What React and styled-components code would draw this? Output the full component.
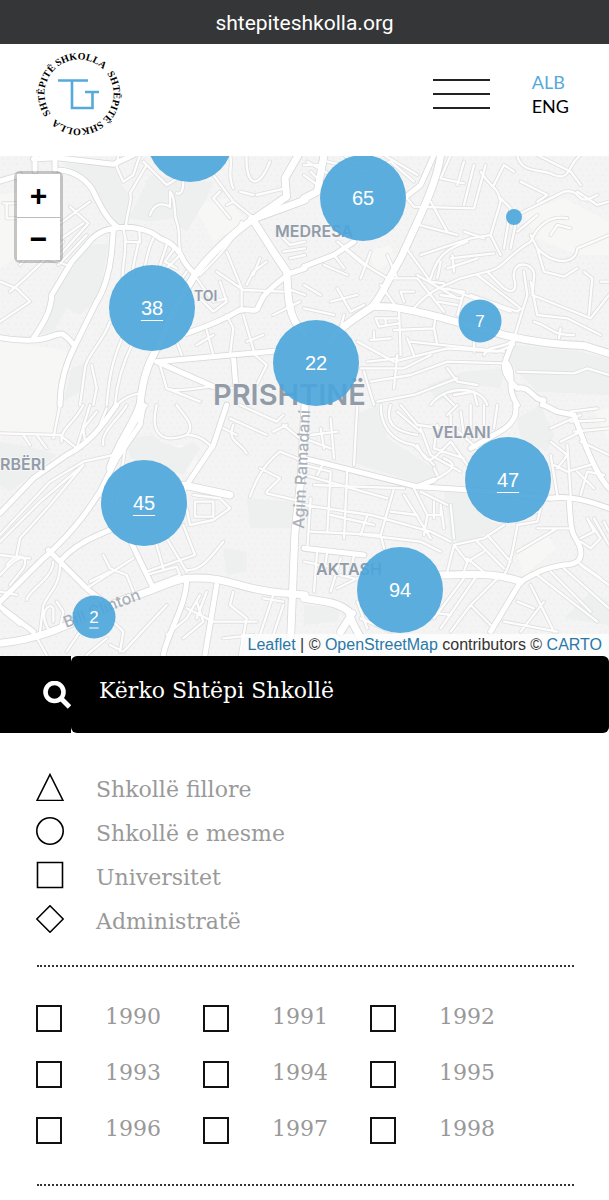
import styled, { createGlobalStyle } from "styled-components";
import { useState } from "react";

const MAP_WIDTH = 609;
const MAP_HEIGHT = 500;

const clusters = [
  { id: "a", x: 190, y: -17, size: 86 },
  { id: "b", x: 363, y: 42, size: 86, count: 65 },
  { id: "c", x: 514, y: 61, size: 16 },
  { id: "d", x: 152, y: 152, size: 86, count: 38, underlined: true },
  { id: "e", x: 480, y: 165, size: 43, count: 7 },
  { id: "f", x: 316, y: 207, size: 86, count: 22 },
  { id: "g", x: 508, y: 324, size: 86, count: 47, underlined: true },
  { id: "h", x: 144, y: 347, size: 86, count: 45, underlined: true },
  { id: "i", x: 400, y: 434, size: 86, count: 94 },
  { id: "j", x: 94, y: 461, size: 43, count: 2, underlined: true },
];

const categories = [
  { name: "Shkollë fillore", shape: <path d="M14 1.5 27 27.5H1z" /> },
  { name: "Shkollë e mesme", shape: <circle cx="14" cy="14" r="13.2" /> },
  { name: "Universitet", shape: <path d="M1.5 1.5h25v25h-25z" /> },
  { name: "Administratë", shape: <path d="M14 .8 27.2 14 14 27.2.8 14z" /> },
];

const years = [1990, 1991, 1992, 1993, 1994, 1995, 1996, 1997, 1998];

// Each tile is drawn at three times the map scale
const tiles = [
  {
    x: 0,
    y: -1,
    parks: [
      "M190 25 345 35 365 90 395 130 380 210 350 205 300 140 275 95z",
      "M385 190 450 60 640 80 620 130 560 230 540 215 520 190 450 200z",
      "M262 270 325 265 300 420 240 480 200 460 160 530 110 540 150 440z",
      "M215 640 260 620 255 700 190 740z",
    ],
    blocks: [
      "M0 560 100 570 210 590 180 750 0 750z",
      "M580 150 680 130 740 200 640 260z",
      "M0 120 60 110 60 300 0 340z",
    ],
    major: [
      "M180 45C230 50 260 80 275 100 300 150 320 195 355 218 400 212 450 225 480 250 520 265 540 290 550 315 565 340 575 350 590 358",
      "M0 78 60 60M105 48V0M165 45V0M100 12 170 8 340 28 400 0",
      "M355 218C310 222 280 240 260 270L215 320 155 420C155 470 120 520 100 550",
      "M0 548C40 556 80 556 100 555 150 555 160 535 185 537 200 540 210 560 225 572",
      "M340 225 335 290C330 350 310 410 290 440L225 572C200 620 180 680 180 750",
      "M560 535C620 515 680 490 720 465 750 460 770 475 775 455L790 425C820 390 850 370 870 355L915 340",
      "M470 620 830 588M470 620 640 695M700 600 708 700",
    ],
    highway: [
      "M915 135 765 190C700 230 620 310 585 360 560 400 500 500 490 545 460 600 430 640 420 750",
      "M765 190 860 125 855 70 895 0",
      "M755 190C790 240 830 310 860 350 865 400 860 450 885 500L915 540",
    ],
    minor: [
      "M10 145H55M20 145V190H60M0 380 50 400 90 440 0 500M30 410 75 370 190 260M60 330 160 220 270 140",
      "M210 155 265 205 180 300M185 250 250 205M175 330 260 240M110 300 200 330",
      "M378 215C380 170 400 130 390 115L440 30M355 0 350 35 370 80 400 60 420 0M430 20 500 90 550 60",
      "M450 180C460 150 480 140 510 155L510 110C530 130 520 180 530 200 545 240 530 270 545 300M550 80C550 110 540 120 530 115",
      "M370 220 378 260 420 262 418 225M375 260C380 300 360 350 370 400M415 260C410 300 395 330 400 360M460 250C440 290 440 320 430 350",
      "M500 270 480 330M545 295 500 340M520 285 495 320 530 340",
      "M560 350 500 440 M400 560C370 620 350 680 345 750M330 500C310 560 260 600 255 640L240 750M370 540C350 590 330 630 320 750M275 630 290 700 280 750",
      "M640 60 700 140 680 150M660 110 640 130 690 190M700 140 755 185M720 110 760 120M700 100C680 60 700 30 690 0M740 0C735 80 770 120 810 20M770 120 855 100",
      "M725 200C700 260 650 310 600 360M680 290 725 400 725 470M650 350 730 405 850 410M740 390 760 350 800 320M780 310 760 360M590 370 640 440 680 430",
      "M600 430 640 470 680 440 660 380 M680 480 700 520 690 600M530 560 545 600M620 525 640 600M590 570 640 540M730 480 765 600M765 600 800 630 770 690M790 540 740 560",
      "M480 630 500 700 600 740M500 700C540 720 640 680 700 700M420 715C380 720 360 740 350 750",
      "M830 230 870 270 915 260M850 290 915 280M870 310 915 300M800 250 870 350M860 400 915 420M820 480 900 440",
    ],
  },
  {
    x: 304,
    y: -1,
    parks: [
      "M635 570 830 590 915 610 915 720 700 710 640 650 610 610z",
      "M370 690 480 650 600 640 590 700 500 690 400 740z",
    ],
    blocks: ["M190 290 260 270 270 310 220 350z", "M650 170 780 130 915 200 915 300 820 300 700 250z"],
    major: [
      "M0 335 90 300 150 260M300 130 350 90 390 0",
      "M605 620C640 660 600 690 640 750",
      "M630 550 605 615C590 650 620 680 640 700 680 690 690 740 720 735L715 750",
    ],
    highway: [
      "M410 0C400 80 350 180 290 310 260 360 230 430 205 455 170 480 100 520 80 560",
      "M205 455C270 450 340 470 420 490L600 540C680 560 780 570 840 572L915 595",
      "M0 130 40 110 60 0",
    ],
    minor: [
      "M250 370H340L420 470M340 360 460 430M330 460C380 400 430 390 470 370L550 350C600 340 610 300 680 260 700 210 740 180 790 190",
      "M300 120 330 155 510 160 545 30M440 0 410 70 480 85M480 20 460 90M510 30 480 150M380 140 430 230M360 150 345 210 460 240",
      "M530 50C560 100 580 90 590 140L560 240 590 300 M570 90 600 30 630 50M590 130 620 160 600 280M640 0C650 60 720 40 750 60 800 80 790 30 830 0",
      "M620 280 640 180 780 110C840 100 810 160 880 120M650 80 730 120 700 140M640 230 700 180M700 0 800 50 830 90M820 110 880 150 915 140",
      "M680 240 700 280C760 340 820 320 820 280L915 240M740 240 760 210 800 220M700 280 720 350 780 365 820 340",
      "M350 300 500 250 560 240M300 270 380 380 420 385M380 370C400 300 430 280 490 260M410 320 400 370M445 300 450 350M440 310 570 295M430 340 520 310M480 230 540 250",
      "M550 350 600 400C630 420 640 400 630 370 620 310 700 320 690 370L685 420 760 450 860 490 915 420M660 350 670 420 630 550M520 360 650 460 640 470 500 420",
      "M840 350 865 370 855 480M680 380 700 480 790 490 890 540M690 500C750 520 740 540 810 540M770 520 765 550 M890 380H915",
      "M410 400 480 410 460 480M400 440 460 450M410 420 470 430M430 400 620 470M280 370 250 300M230 390 280 460 M300 440 290 410 330 410",
      "M215 490H285V460L290 600M215 490 225 515 285 505M245 490V510M200 555 260 550M210 530V550M270 525 390 520 395 480M390 520 400 570",
      "M160 560 270 620 430 580 580 590 630 570M280 600 270 700M310 550 330 600M200 680 320 660 430 620 600 625M190 620 280 610M170 640 300 640 380 600M320 560 600 590M510 560V590",
      "M430 640 460 680 520 690M180 650 210 750M220 740 330 720 460 670M380 750C420 690 530 690 550 750M640 650 810 655 850 640 915 660",
      "M100 260 200 340 250 370M120 280 180 330M200 290 170 370M60 330 130 360M90 300 120 340M0 390 50 420M0 460 90 480M100 400 140 470 180 450M80 440 160 420M120 480 110 520",
      "M70 20 160 40M120 0 180 50 260 20M20 50 60 90M0 60 40 90M240 0 340 60M260 20 330 80M10 20 80 60M0 30 50 30",
      "M450 720 510 710 520 750M420 720 450 750M540 600C550 570 600 580 620 560",
    ],
  },
  {
    x: 0,
    y: 249,
    parks: [
      "M0 110 110 130 170 150 30 260 0 240z",
      "M740 280 880 290 870 370 750 370z",
      "M380 100 460 90 480 110 540 130 580 110 600 130 550 210 390 160z",
      "M670 430 740 440 740 500 680 510z",
    ],
    blocks: ["M0 0 170 0 160 85 0 80z", "M510 120 590 120 590 200 510 200z"],
    major: [
      "M0 325 100 220 200 150C280 110 320 40 350 0",
      "M0 590 120 470C200 400 250 340 300 260L350 160M145 435 180 470 265 555 310 590",
      "M180 470C230 410 300 390 340 370M395 415 460 550M0 605 100 680",
      "M340 175 420 60 430 0M680 0 640 120 570 225 555 250",
      "M560 525C560 600 500 690 490 750M650 540 615 750",
    ],
    highway: [
      "M0 715C150 700 240 640 380 580 460 560 500 530 560 520 680 510 730 560 860 565L915 570",
      "M550 240 690 270M915 0 905 200 885 380 870 750",
      "M420 0C400 60 350 120 330 190",
    ],
    minor: [
      "M0 85 180 90 230 130M70 90 90 120M110 90 140 130M180 0 160 100M250 0C220 60 180 70 185 110M270 0 230 130M290 20 250 70 255 110M320 10 300 60M380 0C360 40 300 80 310 120",
      "M0 390 150 230 250 170 340 150M0 410 120 290 250 180M250 180 150 300 60 400 50 450M0 450 80 460M20 480C50 440 90 450 70 490L30 540M0 510C30 480 50 450 90 460",
      "M160 470C160 520 80 560 80 585M180 480C180 540 150 560 130 600L120 680M150 680C110 620 150 590 160 610V650M180 670 190 620 170 590",
      "M260 550 400 460M310 450 330 490 380 510 400 560M270 530 330 500M300 270 350 300 380 100 440 0",
      "M470 0C450 80 480 120 560 90 590 60 550 30 530 0M560 90C600 90 620 110 640 130M700 60C680 110 720 110 740 145M690 40 800 90M720 0 830 50 850 30M670 70 710 90",
      "M560 310 570 360 640 345 690 310 660 280 580 270M585 290H640V335H585zM470 420 490 490M500 400 560 500M550 360 585 450 440 500M440 510 530 485 540 510 460 540",
      "M560 495C600 500 630 460 670 410M750 275C770 220 790 180 840 140L915 170M780 190 840 220 800 260M800 265 885 285M850 60 900 100M820 80 860 60",
      "M600 570 560 640 500 690M590 590 610 650 550 700M620 560 590 640M560 610 640 650 770 650M700 560 690 600M690 600 740 640 720 750M670 700 760 690M820 570 760 750M850 600 800 750M790 580 850 590",
      "M340 650 370 680 360 740M330 720 370 740 500 600M240 680 200 740M260 750 320 700M100 680 140 750M0 560 50 570M10 620 60 660",
    ],
  },
  {
    x: 304,
    y: 249,
    parks: [
      "M150 30 220 0 250 100 390 190 400 210 340 235 155 175z",
      "M420 260 490 260 560 350 590 360 480 420 440 400z",
      "M640 40 710 0 750 90 730 140 650 100z",
      "M860 560 915 590 915 660 780 640z",
      "M0 600 110 610 100 650 0 660z",
    ],
    blocks: ["M640 450 730 390 760 430 660 510z", "M870 20 915 10 915 110z"],
    major: [
      "M0 160 160 200 340 245 500 255 740 280C800 270 860 290 915 310",
      "M500 130 570 90C630 60 640 30 635 0M0 430 180 450M340 245 390 225",
      "M720 0 760 20 810 30C840 110 870 200 915 250",
      "M795 280C800 350 800 380 815 400 840 440 840 480 780 480 720 490 700 500 650 530L560 680",
    ],
    highway: [
      "M0 580C60 590 100 590 135 620 140 650 160 680 200 750",
      "M110 680 145 625M410 510C500 510 570 500 650 530",
    ],
    minor: [
      "M0 180 80 200 70 380M20 280 10 430M60 170 40 210M130 190 120 400M0 300 200 330 380 380 440 410M20 380 230 390M30 240 300 250M0 210 250 280M270 250 230 390 240 430",
      "M230 0C230 60 260 110 330 120L390 180M160 0 150 180M260 0C240 60 280 80 340 90M280 20 350 80M290 0 340 60 420 70M430 30 460 0M440 30 440 60 520 130M470 20 480 90M500 0V100M540 0V60M580 0 570 70",
      "M340 120C360 160 370 180 400 150L440 110M350 70 380 150 470 200M400 60 390 130 480 160M390 190 400 210M420 160C470 180 440 200 390 225M440 110 490 180",
      "M300 270 380 400M330 250 370 330H410V300M350 260 430 300M390 290V340M370 330 360 390M440 300 450 400M410 300 420 370 M180 390 350 410 410 440M260 320 340 330M190 330 170 390M80 330 210 360",
      "M430 500 450 420 540 400 600 360M450 420 490 470 480 500M520 410 600 490M550 390 620 470M490 470 540 440M490 460 550 510M640 360C630 420 620 480 600 510M640 360 700 350 710 310M660 330 700 320",
      "M640 440 760 370 700 370M760 370 795 370M740 110 790 150 760 190M750 180 790 200 860 180M790 120 800 270M740 150 760 270M830 270 850 200 900 210M820 200 870 250M770 110 830 80M740 70 830 30",
      "M830 400 870 380 850 340 890 400 860 430 830 410M870 340 915 420M900 350 915 380M820 470 890 520M780 490 915 610M740 500 860 620M680 540 750 680M700 510 880 650M830 480 915 540",
      "M800 20 880 10M800 50 900 45M810 80 915 70M830 110 915 150M560 660 500 600 440 680M500 600 580 520M410 670 520 510M390 640 480 520M370 620 440 630M650 680 720 590M600 650 760 680M640 590 690 610",
      "M70 440 60 500 150 520M110 460 80 560M40 430 30 560M0 470 100 490M100 550 160 520M150 450 140 500M170 640 260 680M160 590 190 670M0 100 80 130M50 70 60 130M20 90 100 80M80 40 90 160",
    ],
  },
];

const roadPasses = [
  { kind: "minor", color: "#dfdfdf", width: 12 },
  { kind: "major", color: "#d9d9d9", width: 20 },
  { kind: "highway", color: "#d9d9d9", width: 26 },
  { kind: "minor", color: "#fdfdfd", width: 7 },
  { kind: "major", color: "#ffffff", width: 15 },
  { kind: "highway", color: "#ffffff", width: 21 },
];

function Logo() {
  return (
    <LogoDrawing viewBox="0 0 84 84" role="img" aria-label="Shtëpitë Shkolla">
      <path id="ring" d="M7.500 42A34.500 34.500 0 0 1 76.500 42A34.500 34.500 0 0 1 7.500 42" fill="none" />
      <LogoText transform="rotate(-35 42 42)">
        <textPath href="#ring">SHTËPITË SHKOLLA</textPath>
      </LogoText>
      <LogoText transform="rotate(144 42 42)">
        <textPath href="#ring">SHTËPITË SHKOLLA</textPath>
      </LogoText>
      <path
        d="M21 28.500H51M35 28.500V56H55.500V40M48 40H62"
        fill="none"
        stroke="#55aadb"
        strokeWidth="2.6"
      />
    </LogoDrawing>
  );
}

function StreetMap() {
  return (
    <MapDrawing viewBox={`0 0 ${MAP_WIDTH} ${MAP_HEIGHT}`} aria-hidden="true">
      <defs>
        <pattern id="houses" width="13" height="11" patternUnits="userSpaceOnUse">
          <path d="M1 2h3v2h-3zM7 1h2v3h-2zM3 7h3v2h-3zM10 7h2v2h-2z" fill="#f1f1f1" />
        </pattern>
      </defs>
      <rect width={MAP_WIDTH} height={MAP_HEIGHT} fill="#f4f4f4" />
      <rect width={MAP_WIDTH} height={MAP_HEIGHT} fill="url(#houses)" />
      {tiles.map(({ x, y, parks, blocks }) => (
        <g key={`${x}-${y}`} transform={`translate(${x} ${y}) scale(0.3333)`}>
          <path d={blocks.join("")} fill="#f7f7f5" />
          <path d={parks.join("")} fill="#edf0ee" />
        </g>
      ))}
      {roadPasses.map(({ kind, color, width }) => (
        <g
          key={kind + color}
          fill="none"
          stroke={color}
          strokeWidth={width}
          strokeLinecap="round"
          strokeLinejoin="round"
        >
          {tiles.map((tile) => (
            <path
              key={`${tile.x}-${tile.y}`}
              transform={`translate(${tile.x} ${tile.y}) scale(0.3333)`}
              d={tile[kind].join("")}
            />
          ))}
        </g>
      ))}
      <PlaceName x="275" y="81">MEDRESA</PlaceName>
      <PlaceName x="194" y="145" $size={14}>TOI</PlaceName>
      <PlaceName x="432" y="282">VELANI</PlaceName>
      <PlaceName x="0" y="314">RBËRI</PlaceName>
      <PlaceName x="316" y="419">AKTASH</PlaceName>
      <PlaceName x="213" y="249" $size={29}>PRISHTINË</PlaceName>
      <StreetName transform="translate(304 373) rotate(-87)">Agim Ramadani</StreetName>
      <StreetName transform="translate(66 472) rotate(-21)">Bill Clinton</StreetName>
    </MapDrawing>
  );
}

export default function App() {
  const [language, setLanguage] = useState("ALB");
  const [selectedYears, setSelectedYears] = useState([]);

  function toggleYear(year) {
    setSelectedYears(
      selectedYears.includes(year)
        ? selectedYears.filter((selected) => selected !== year)
        : [...selectedYears, year]
    );
  }

  return (
    <>
      <GlobalStyle />
      <AddressBar>shtepiteshkolla.org</AddressBar>
      <Header>
        <Logo />
        <MenuButton aria-label="Menu">
          <MenuLine />
          <MenuLine />
          <MenuLine />
        </MenuButton>
        <Languages>
          {["ALB", "ENG"].map((name) => (
            <LanguageButton
              key={name}
              $active={language === name}
              onClick={() => setLanguage(name)}
            >
              {name}
            </LanguageButton>
          ))}
        </Languages>
      </Header>

      <main>
        <MapArea>
          <StreetMap />
          {clusters.map(({ id, x, y, size, count, underlined }) => (
            <Cluster
              key={id}
              aria-label={count ? undefined : "Shkollë"}
              $x={x}
              $y={y}
              $size={size}
              $underlined={underlined}
            >
              {count}
            </Cluster>
          ))}
          <ZoomControl>
            <ZoomButton aria-label="Zoom in">+</ZoomButton>
            <ZoomButton aria-label="Zoom out">−</ZoomButton>
          </ZoomControl>
          <Attribution>
            <a href="#leaflet">Leaflet</a> | © <a href="#osm">OpenStreetMap</a>{" "}
            contributors © <a href="#carto">CARTO</a>
          </Attribution>
        </MapArea>

        <SearchForm onSubmit={(event) => event.preventDefault()}>
          <SearchButton aria-label="Kërko">
            <svg width="28" height="28" viewBox="0 0 28 28" fill="none" stroke="#fff">
              <circle cx="11.500" cy="11" r="9" strokeWidth="4.600" />
              <path d="M17.500 17 26.500 26" strokeWidth="5" />
            </svg>
          </SearchButton>
          <SearchInput
            type="text"
            aria-label="Kërko Shtëpi Shkollë"
            placeholder="Kërko Shtëpi Shkollë"
          />
        </SearchForm>

        <Legend>
          {categories.map(({ name, shape }) => (
            <LegendItem key={name}>
              <LegendIcon viewBox="0 0 28 28">{shape}</LegendIcon>
              <LegendName>{name}</LegendName>
            </LegendItem>
          ))}
        </Legend>
        <Divider />

        <Years>
          {years.map((year) => (
            <YearLabel key={year}>
              <Checkbox
                type="checkbox"
                checked={selectedYears.includes(year)}
                onChange={() => toggleYear(year)}
              />
              <YearName>{year}</YearName>
            </YearLabel>
          ))}
        </Years>
        <Divider />
      </main>
    </>
  );
}

const GlobalStyle = createGlobalStyle`
  * {
    box-sizing: border-box;
  }

  body {
    margin: 0;
    background: #fff;
    color: #000;
    font-family: "Liberation Sans", sans-serif;
  }

  button {
    padding: 0;
    border: none;
    background: none;
    cursor: pointer;
  }
`;

const AddressBar = styled.div`
  height: 44px;
  background: #353638;
  color: #fff;
  font-family: Roboto, sans-serif;
  font-size: 21px;
  line-height: 46px;
  text-align: center;
`;

const Header = styled.header`
  display: flex;
  align-items: center;
  height: 112px;
  padding: 0 40px 12px 37px;
`;

const LogoDrawing = styled.svg`
  width: 84px;
  height: 84px;
  overflow: visible;
`;

const LogoText = styled.text`
  font-family: "Liberation Serif", serif;
  font-size: 10px;
  font-weight: 700;
`;

const MenuButton = styled.button`
  display: flex;
  flex-direction: column;
  gap: 12px;
  width: 57px;
  margin-left: auto;
`;

const MenuLine = styled.span`
  width: 100%;
  height: 2px;
  background: #222;
`;

const Languages = styled.div`
  display: flex;
  flex-direction: column;
  align-items: flex-start;
  margin-left: 42px;
`;

const LanguageButton = styled.button`
  color: ${({ $active }) => ($active ? "#55aadb" : "#000")};
  font-family: Lato, sans-serif;
  font-size: 18px;
  line-height: 24px;
`;

const MapArea = styled.section`
  position: relative;
  width: 100%;
  aspect-ratio: ${MAP_WIDTH} / ${MAP_HEIGHT};
  overflow: hidden;
`;

const MapDrawing = styled.svg`
  display: block;
  width: 100%;
  height: 100%;
`;

const PlaceName = styled.text`
  fill: #929ca8;
  font-family: Inter, sans-serif;
  font-size: ${({ $size = 16 }) => $size}px;
  font-weight: 600;
  paint-order: stroke;
  stroke: #f5f5f5;
  stroke-width: 2px;
`;

const StreetName = styled.text`
  fill: #aab0b8;
  font-family: Inter, sans-serif;
  font-size: 16px;
  font-weight: 500;
`;

const Cluster = styled.button`
  position: absolute;
  left: ${({ $x }) => ($x / MAP_WIDTH) * 100}%;
  top: ${({ $y }) => ($y / MAP_HEIGHT) * 100}%;
  width: ${({ $size }) => $size}px;
  height: ${({ $size }) => $size}px;
  transform: translate(-50%, -50%);
  border-radius: 50%;
  && {
    background: rgba(74, 165, 220, 0.9);
  }
  color: #fff;
  font-family: "Liberation Sans", sans-serif;
  font-size: ${({ $size }) => ($size > 50 ? 20 : 17)}px;
  text-decoration: ${({ $underlined }) => ($underlined ? "underline" : "none")};
  text-decoration-thickness: 1px;
  text-underline-offset: 5px;
`;

const ZoomControl = styled.div`
  position: absolute;
  top: 15px;
  left: 14px;
  display: flex;
  flex-direction: column;
  border: 3px solid rgba(0, 0, 0, 0.2);
  border-radius: 6px;
  background-clip: padding-box;
`;

const ZoomButton = styled.button`
  width: 43px;
  height: 43px;
  && {
    background: #fff;
  }
  color: #000;
  font-family: "Liberation Sans", sans-serif;
  font-size: 30px;
  font-weight: 700;
  line-height: 42px;

  & + & {
    border-top: 1px solid #bbb;
  }
`;

const Attribution = styled.div`
  position: absolute;
  right: 0;
  bottom: 0;
  padding: 0 7px;
  background: rgba(255, 255, 255, 0.75);
  color: #333;
  font-size: 16px;
  line-height: 22px;
  white-space: nowrap;

  a {
    color: #2a78a8;
    text-decoration: none;
  }
`;

const SearchForm = styled.form`
  display: flex;
  height: 77px;
`;

const SearchButton = styled.button`
  display: flex;
  align-items: center;
  justify-content: flex-end;
  flex: none;
  width: 71px;
  && {
    background: #000;
  }
`;

const SearchInput = styled.input`
  flex: 1;
  min-width: 0;
  padding: 0 28px 8px;
  border: none;
  border-radius: 6px;
  background: #000;
  color: #fff;
  font-family: "DejaVu Serif", serif;
  font-size: 22px;

  &::placeholder {
    color: #fff;
    opacity: 1;
  }
`;

const Legend = styled.ul`
  margin: 0;
  padding: 32px 36px 24px;
  list-style: none;
`;

const LegendItem = styled.li`
  display: flex;
  align-items: center;
  gap: 32px;
  height: 44px;
  color: #999;
  font-family: "DejaVu Serif", serif;
  font-size: 22px;
`;

const LegendIcon = styled.svg`
  flex: none;
  width: 28px;
  height: 28px;
  fill: none;
  stroke: #000;
  stroke-width: 1.6px;
`;

const LegendName = styled.span`
  padding-top: 4px;
`;

const Divider = styled.hr`
  margin: 0 35px 0 37px;
  border: none;
  border-top: 2px dotted #333;
`;

const Years = styled.div`
  display: grid;
  grid-template-columns: repeat(3, 1fr);
  padding: 23px 72px 26px 36px;
`;

const YearLabel = styled.label`
  display: flex;
  align-items: center;
  gap: 43px;
  height: 56px;
  color: #999;
  font-family: "DejaVu Serif", serif;
  font-size: 22px;
  cursor: pointer;
`;

const YearName = styled.span`
  padding-bottom: 4px;
`;

const Checkbox = styled.input`
  appearance: none;
  flex: none;
  width: 26px;
  height: 27px;
  margin: 0;
  border: 2px solid #111;

  &:checked {
    background: #111;
  }
`;
